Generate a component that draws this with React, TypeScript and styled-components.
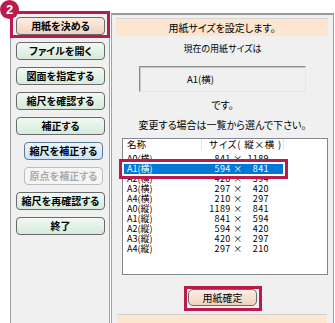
import * as React from 'react';
import styled, { createGlobalStyle, css } from 'styled-components';

const GlobalStyle = createGlobalStyle`
  body { margin: 0; background: #fff; }
`;

const crimson = '#b81b4c';

const Page = styled.div`
  position: relative;
  width: 335px;
  height: 323px;
  box-sizing: border-box;
  padding: 13px 1px 0 10px;
  display: flex;
  gap: 1px;
  overflow: hidden;
  background: #fff;
  font-family: "Noto Sans CJK JP", "Noto Sans", sans-serif;
  font-feature-settings: "palt";
  color: #000;
`;

const StepBadge = styled.div`
  position: absolute;
  left: 0;
  top: 0;
  width: 19px;
  height: 19px;
  border-radius: 50%;
  background: ${crimson};
  color: #fff;
  font: bold 13px/19px "Liberation Sans", sans-serif;
  text-align: center;
  z-index: 3;
`;

const SidePanel = styled.div`
  width: 100px;
  box-sizing: border-box;
  border: 1px solid #a0a0a0;
  border-bottom: none;
  background: #f0f0f0;
  display: flex;
  flex-direction: column;
  gap: 7px;
  padding: 3px 0 0 5px;
`;

type Tone = 'peach' | 'green' | 'blue' | 'off';

const tones: Record<Tone, ReturnType<typeof css>> = {
  peach: css`
    background: linear-gradient(#fcede2, #f1d3be);
    border-color: #6a6a6a;
  `,
  green: css`
    background: linear-gradient(#f1f9f3, #d6eadc);
    border-color: #6a6a6a;
  `,
  blue: css`
    background: linear-gradient(#eaf4fc, #cfe4f5);
    border-color: #5d7891;
  `,
  off: css`
    background: #f5f5f5;
    border-color: #bdbdbd;
    color: #ababab;
  `,
};

const NavButton = styled.div<{ $tone: Tone; $indent?: boolean; $marked?: boolean }>`
  position: relative;
  height: 18px;
  width: ${(p) => (p.$indent ? 79 : 89)}px;
  margin-left: ${(p) => (p.$indent ? 8 : 0)}px;
  box-sizing: border-box;
  border: 1px solid;
  border-radius: 4px;
  font-size: 10px;
  font-weight: bold;
  line-height: 16px;
  text-align: center;
  white-space: nowrap;
  ${(p) => tones[p.$tone]}
  ${(p) =>
    p.$marked &&
    css`
      &::after {
        content: '';
        position: absolute;
        inset: -7px -6px -4px -7px;
        border: 3px solid ${crimson};
      }
    `}
`;

const MainPanel = styled.div`
  flex: 1;
  box-sizing: border-box;
  border: 1px solid #a0a0a0;
  border-top: 2px solid #9a9a9a;
  border-bottom: none;
  background: #f0f0f0;
  display: flex;
  flex-direction: column;
`;

const HeaderBar = styled.div`
  margin: 3px 5px 0 4px;
  height: 19px;
  box-sizing: border-box;
  border-top: 1px solid #d4d4d4;
  background: #fce6cf;
  font-size: 10px;
  line-height: 17px;
  text-align: center;
`;

const Caption = styled.div<{ $top: number; $size?: number }>`
  margin-top: ${(p) => p.$top}px;
  height: 12px;
  font-size: ${(p) => p.$size ?? 10}px;
  line-height: 12px;
  text-align: center;
  white-space: nowrap;
`;

const ValueBox = styled.div`
  align-self: center;
  margin-top: 11px;
  width: 167px;
  height: 26px;
  box-sizing: border-box;
  border: 1px solid;
  border-color: #8e8e8e #e6e6e6 #e6e6e6 #8e8e8e;
  box-shadow: inset 1px 1px 0 #c8c8c8;
  padding-right: 44px;
  font-size: 9.5px;
  line-height: 24px;
  text-align: center;
`;

const ListBox = styled.div`
  margin: 7px 5px 0 10px;
  height: 142px;
  box-sizing: border-box;
  border: 1px solid #828790;
  background: #fff;
  font-size: 9px;
`;

const cols = css`
  display: grid;
  grid-template-columns: 79px 82px 1fr;
`;

const ListHead = styled.div`
  ${cols}
  height: 11px;
  margin-bottom: 4px;
  font-size: 9.5px;
  line-height: 11px;
`;

const HeadCell = styled.div<{ $pad: number; $spread?: boolean }>`
  padding-left: ${(p) => p.$pad}px;
  border-right: 1px solid #e5e5e5;
  white-space: pre;
  letter-spacing: ${(p) => (p.$spread ? 0.8 : 0)}px;
`;

const Row = styled.div<{ $selected?: boolean }>`
  ${cols}
  position: relative;
  height: 10px;
  line-height: 10px;
  ${(p) =>
    p.$selected &&
    css`
      color: #fff;
      & > div { background: #0078d7; }
      &::after {
        content: '';
        position: absolute;
        left: -4px;
        top: -5px;
        width: 169px;
        height: 20px;
        box-sizing: border-box;
        border: 3px solid ${crimson};
        box-shadow: inset 0 0 0 2px #fff;
        z-index: 2;
      }
    `}
`;

const NameCell = styled.div`
  padding-left: 4px;
  white-space: nowrap;
`;

const SizeCell = styled.div`
  padding-right: 15px;
  text-align: right;
  white-space: pre;
  letter-spacing: 0.4px;
`;

const ConfirmWrap = styled.div`
  position: relative;
  align-self: center;
  margin-top: 14px;
  &::after {
    content: '';
    position: absolute;
    inset: -3px -5px -5px -4px;
    border: 3px solid ${crimson};
  }
`;

const ConfirmButton = styled.div`
  width: 69px;
  height: 17px;
  box-sizing: border-box;
  border: 1px solid #6a6a6a;
  border-radius: 5px;
  background: linear-gradient(#fcede2, #f1d3be);
  font-size: 10px;
  line-height: 15px;
  text-align: center;
`;

const StatusStrip = styled.div`
  margin: 8px 6px 0 5px;
  height: 8px;
  border-top: 1px solid #cfcfcf;
  background: #fce6cf;
`;

const navItems: { label: string; tone: Tone; indent?: boolean; marked?: boolean }[] = [
  { label: '用紙を決める', tone: 'peach', marked: true },
  { label: 'ファイルを開く', tone: 'green' },
  { label: '図面を指定する', tone: 'green' },
  { label: '縮尺を確認する', tone: 'green' },
  { label: '補正する', tone: 'green' },
  { label: '縮尺を補正する', tone: 'blue', indent: true },
  { label: '原点を補正する', tone: 'off', indent: true },
  { label: '縮尺を再確認する', tone: 'green' },
  { label: '終了', tone: 'green' },
];

const sizes: [string, number, number][] = [
  ['A0(横)', 841, 1189],
  ['A1(横)', 594, 841],
  ['A2(横)', 420, 594],
  ['A3(横)', 297, 420],
  ['A4(横)', 210, 297],
  ['A0(縦)', 1189, 841],
  ['A1(縦)', 841, 594],
  ['A2(縦)', 594, 420],
  ['A3(縦)', 420, 297],
  ['A4(縦)', 297, 210],
];

// second number padded with a figure space so the × lines up
const fmt = (h: number, w: number) => `${h} ×  ${String(w).padStart(4, '\u2007')}`;

export default function App() {
  return (
    <>
      <GlobalStyle />
      <Page>
        <StepBadge>2</StepBadge>
        <SidePanel>
          {navItems.map((n) => (
            <NavButton key={n.label} $tone={n.tone} $indent={n.indent} $marked={n.marked}>
              {n.label}
            </NavButton>
          ))}
        </SidePanel>
        <MainPanel>
          <HeaderBar>用紙サイズを設定します。</HeaderBar>
          <Caption $top={7} $size={9}>現在の用紙サイズは</Caption>
          <ValueBox>A1(横)</ValueBox>
          <Caption $top={7}>です。</Caption>
          <Caption $top={8}>変更する場合は一覧から選んで下さい。</Caption>
          <ListBox>
            <ListHead>
              <HeadCell $pad={4}>名称</HeadCell>
              <HeadCell $pad={7} $spread>サイズ( 縦×横 )</HeadCell>
            </ListHead>
            {sizes.map(([name, h, w]) => (
              <Row key={name} $selected={name === 'A1(横)'}>
                <NameCell>{name}</NameCell>
                <SizeCell>{fmt(h, w)}</SizeCell>
              </Row>
            ))}
          </ListBox>
          <ConfirmWrap>
            <ConfirmButton>用紙確定</ConfirmButton>
          </ConfirmWrap>
          <StatusStrip />
        </MainPanel>
      </Page>
    </>
  );
}
